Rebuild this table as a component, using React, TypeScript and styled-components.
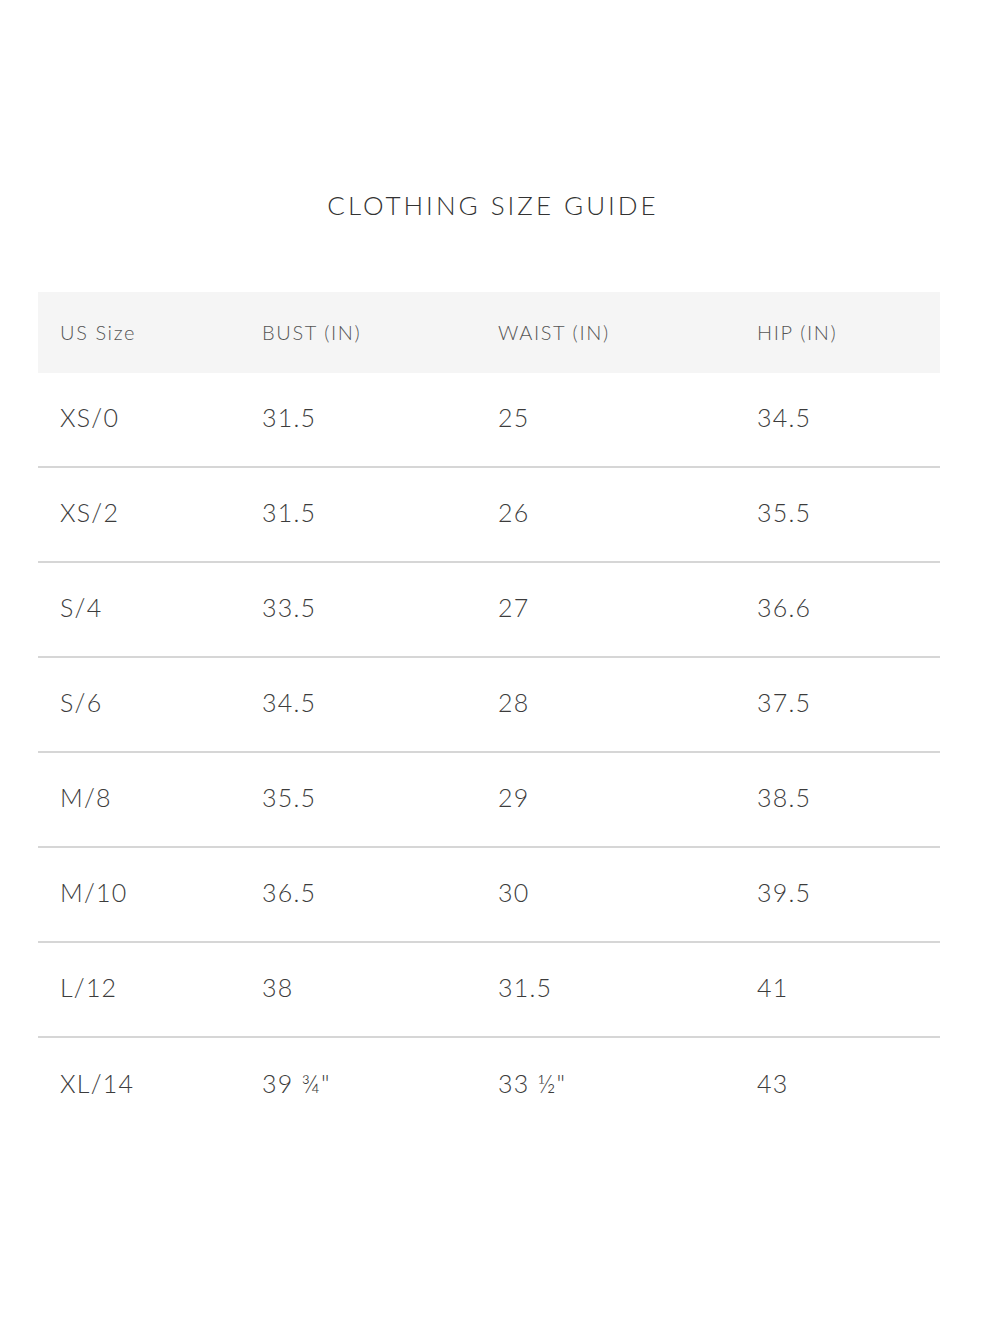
import styled, { createGlobalStyle } from "styled-components"

const GlobalStyle = createGlobalStyle`
    body {
        margin: 0;
        background: #ffffff;
        font-family: "Lato", "Liberation Sans", sans-serif;
    }
`

const rows = [
    ["XS/0", "31.5", "25", "34.5"],
    ["XS/2", "31.5", "26", "35.5"],
    ["S/4", "33.5", "27", "36.6"],
    ["S/6", "34.5", "28", "37.5"],
    ["M/8", "35.5", "29", "38.5"],
    ["M/10", "36.5", "30", "39.5"],
    ["L/12", "38", "31.5", "41"],
    ["XL/14", "39 ¾\"", "33 ½\"", "43"],
]

const headers = ["US Size", "BUST (IN)", "WAIST (IN)", "HIP (IN)"]

export default function App() {
    return (
        <Page>
            <GlobalStyle />
            <Title>CLOTHING SIZE GUIDE</Title>
            <Table>
                <HeaderRow>
                    {headers.map((h) => (
                        <HeaderCell key={h}>{h}</HeaderCell>
                    ))}
                </HeaderRow>
                {rows.map((r, i) => (
                    <Row key={r[0]} last={i === rows.length - 1}>
                        {r.map((c, j) => (
                            <Cell key={j}>{c}</Cell>
                        ))}
                    </Row>
                ))}
            </Table>
        </Page>
    )
}

const Page = styled.div`
    width: 1000px;
    height: 1333px;
    padding: 190px 60px 0 38px;
    box-sizing: border-box;
`

const Title = styled.h1`
    margin: 0 0 72px;
    text-align: center;
    font-size: 26px;
    line-height: 30px;
    font-weight: 300;
    letter-spacing: 3px;
    color: #333;
    padding-left: 8px;
`

const Table = styled.div`
    width: 902px;
`

const grid = `
    display: grid;
    grid-template-columns: 202px 236px 259px 1fr;
    align-items: center;
    padding-left: 22px;
`

const HeaderRow = styled.div`
    ${grid}
    height: 81px;
    background: #f5f5f5;
`

const HeaderCell = styled.div`
    font-size: 20px;
    font-weight: 300;
    letter-spacing: 1.6px;
    color: #555;
    padding-bottom: 2px;
`

const Row = styled.div<{ last?: boolean }>`
    ${grid}
    height: 95px;
    box-sizing: border-box;
    border-bottom: ${({ last }) => (last ? "none" : "2px solid #d6d6d6")};
`

const Cell = styled.div`
    font-size: 25px;
    font-weight: 300;
    letter-spacing: 1.2px;
    color: #3c3c3c;
    padding-bottom: 5px;
`
